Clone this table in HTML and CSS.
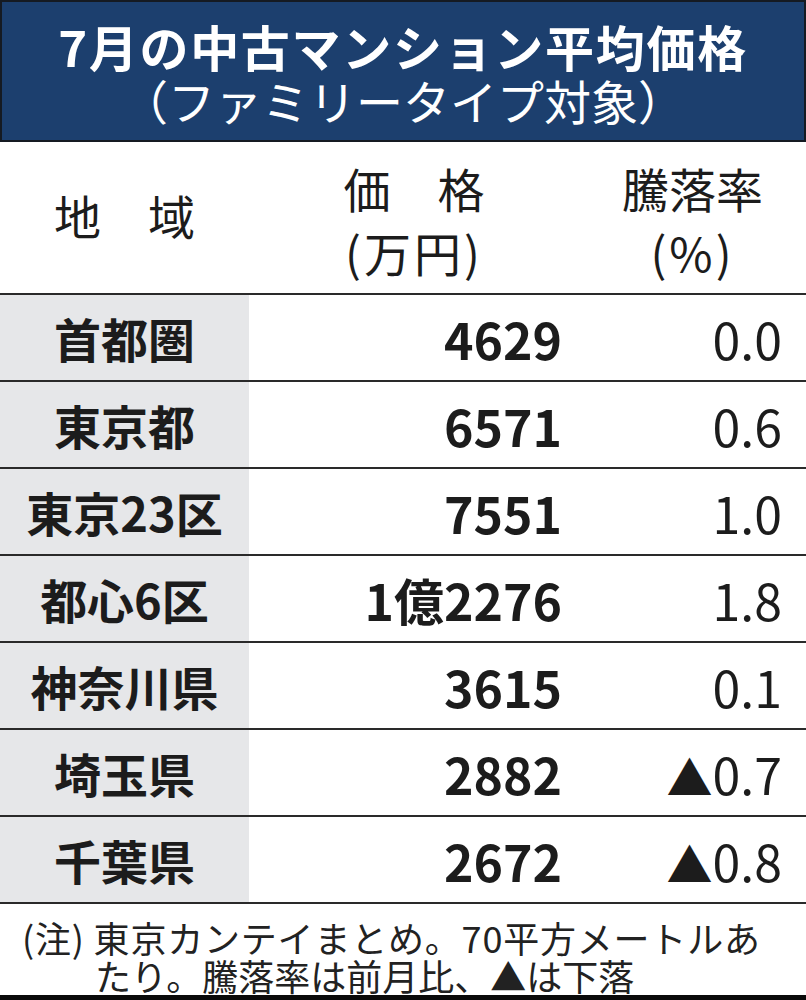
FILE: index.html
```html
<!DOCTYPE html>
<html lang="ja">
<head>
<meta charset="utf-8">
<title>7月の中古マンション平均価格</title>
<link rel="stylesheet" href="styles.css">
</head>
<body>
<div class="page">
  <header class="title-box">
    <div class="title-main">7月の中古マンション平均価格</div>
    <div class="title-sub">（ファミリータイプ対象）</div>
  </header>
  <div class="table">
    <div class="head">
      <div class="hcell hcell-region">地　域</div>
      <div class="hcell">
        <span>価　格</span>
        <span class="paren">(万円)</span>
      </div>
      <div class="hcell">
        <span>騰落率</span>
        <span class="paren">(%)</span>
      </div>
    </div>
    <div class="row"><div class="region">首都圏</div><div class="price">4629</div><div class="pct">0.0</div></div>
    <div class="row"><div class="region">東京都</div><div class="price">6571</div><div class="pct">0.6</div></div>
    <div class="row"><div class="region">東京23区</div><div class="price">7551</div><div class="pct">1.0</div></div>
    <div class="row"><div class="region">都心6区</div><div class="price">1億2276</div><div class="pct">1.8</div></div>
    <div class="row"><div class="region">神奈川県</div><div class="price">3615</div><div class="pct">0.1</div></div>
    <div class="row"><div class="region">埼玉県</div><div class="price">2882</div><div class="pct"><span class="tri">▲</span>0.7</div></div>
    <div class="row"><div class="region">千葉県</div><div class="price">2672</div><div class="pct"><span class="tri">▲</span>0.8</div></div>
  </div>
  <p class="note"><span class="note-first">(注) 東京カンテイまとめ。70平方メートルあ</span><br>たり。騰落率は前月比、▲は下落</p>
</div>
</body>
</html>
```

FILE: styles.css
```css
html {
  background: #0a0a0a;
}
body {
  margin: 0;
  font-family: "Noto Sans CJK JP", "Noto Sans", sans-serif;
  color: #1c1c1c;
}
.page {
  width: 806px;
  height: 995px;
  overflow: hidden;
  background: #fff;
}
.title-box {
  box-sizing: border-box;
  height: 142px;
  background: #1c3f6e;
  border: 2px solid #151a22;
  color: #fff;
  text-align: center;
  padding-top: 16px;
}
.title-main {
  font-size: 49px;
  font-weight: 700;
  line-height: 56px;
  letter-spacing: 1.7px;
}
.title-sub {
  font-size: 47px;
  font-weight: 400;
  line-height: 52px;
}
.head,
.row {
  display: grid;
  grid-template-columns: 249px 330px 1fr;
}
.head {
  height: 151px;
  border-bottom: 2px solid #2a2a2a;
  align-items: center;
}
.hcell {
  display: flex;
  flex-direction: column;
  align-items: center;
  font-size: 47px;
  line-height: 64px;
  padding-top: 4px;
}
.hcell-region {
  padding-top: 0;
  padding-bottom: 6px;
}
.paren {
  letter-spacing: 3px;
}
.row {
  height: 85px;
  border-bottom: 2px solid #2a2a2a;
  align-items: center;
}
.region {
  background: #e6e7e9;
  height: 100%;
  display: flex;
  align-items: center;
  justify-content: center;
  font-size: 47px;
  font-weight: 700;
}
.price {
  text-align: right;
  padding-right: 17px;
  font-size: 50px;
  font-weight: 700;
}
.pct {
  text-align: right;
  padding-right: 24px;
  font-size: 50px;
  font-weight: 400;
}
.tri {
  font-size: 46px;
}
.note {
  margin: 0;
  padding: 14px 0 0 95px;
  text-indent: -73px;
  font-size: 36px;
  line-height: 38px;
  color: #222;
}
.note-first {
  letter-spacing: 0.8px;
}
```
